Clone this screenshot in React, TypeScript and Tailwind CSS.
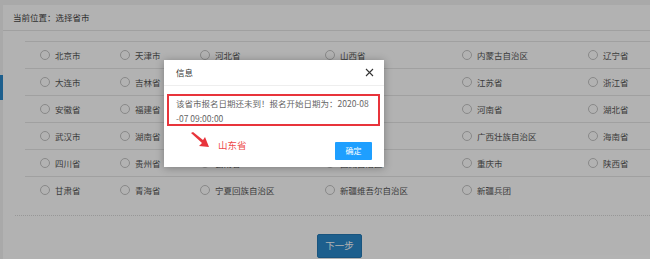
import React from "react";

const rows: string[][] = [
  ["北京市", "天津市", "河北省", "山西省", "内蒙古自治区", "辽宁省"],
  ["大连市", "吉林省", "黑龙江省", "上海市", "江苏省", "浙江省"],
  ["安徽省", "福建省", "江西省", "山东省", "河南省", "湖北省"],
  ["武汉市", "湖南省", "广东省", "深圳市", "广西壮族自治区", "海南省"],
  ["四川省", "贵州省", "云南省", "西藏自治区", "重庆市", "陕西省"],
  ["甘肃省", "青海省", "宁夏回族自治区", "新疆维吾尔自治区", "新疆兵团", ""],
];

const font = { fontFamily: '"Noto Sans CJK SC", "Noto Sans", sans-serif' };

export default function App() {
  return (
    <div className="relative w-[650px] h-[259px] overflow-hidden bg-[#f2f2f2]" style={font}>
      <div className="absolute left-0 top-[75px] w-[3px] h-[25px] bg-[#2a88ca]" />
      <div className="ml-[3px] mt-[5px] h-[254px] bg-white flex flex-col">
        <div className="h-[26px] border-b border-[#e6e6e6] flex items-center pl-[10px] text-[8.5px] text-[#444]">
          当前位置：选择省市
        </div>
        <div className="mt-[10px] ml-[22px]">
          {rows.map((r, i) => (
            <div
              key={i}
              className="grid grid-cols-[80px_80px_125px_137px_126px_1fr] h-[27px] items-center pl-[15px] border-t border-[#e6e6e6]"
            >
              {r.map((c, j) => (
                <div key={j} className="flex items-center gap-[5px] text-[8.5px] text-[#555] leading-none">
                  {c && <span className="w-[10px] h-[10px] rounded-full border border-[#c4c4c4] bg-white shrink-0" />}
                  {c && <span>{c}</span>}
                </div>
              ))}
            </div>
          ))}
        </div>
        <div className="mt-[12px] ml-[12px] border-t border-dotted border-[#d8d8d8]" />
        <div className="mt-[14px] ml-[314px]">
          <button className="w-[45px] h-[24px] bg-[#2a88ca] border border-[#2479b5] rounded-[2px] text-white text-[9.5px] leading-none">
            下一步
          </button>
        </div>
      </div>

      <div className="absolute inset-0 bg-black/30" />

      <div className="absolute left-[164px] top-[60px] w-[220px] h-[107px] bg-white shadow-[0_1px_8px_rgba(0,0,0,0.3)]">
        <div className="h-[26px] border-b border-[#eeeeee] flex items-center justify-between pl-[12px] pr-[10px]">
          <span className="text-[8.5px] text-[#333]">信息</span>
          <svg width="9" height="9" viewBox="0 0 9 9">
            <path d="M1 1L8 8M8 1L1 8" stroke="#333" strokeWidth="1.1" />
          </svg>
        </div>
        <div className="ml-[3px] mt-[8px] w-[213px] h-[32px] border-2 border-[#e8343b] pl-[7px] pt-[0px] text-[8.5px] leading-[15px] text-[#666] whitespace-nowrap">
          该省市报名日期还未到！报名开始日期为：2020-08
          <br />
          -07 09:00:00
        </div>
        <svg className="absolute left-[27px] top-[72px]" width="20" height="17" viewBox="0 0 20 17">
          <polygon points="0,1 2,0 12,8 14,5 18,15 8,14 11,11" fill="#e8343b" />
        </svg>
        <span className="absolute left-[54px] top-[76px] text-[9.5px] leading-[18px] text-[#ee4a4a]">山东省</span>
        <button className="absolute left-[171px] top-[82px] w-[37px] h-[18px] bg-[#1e9fff] text-white text-[8px] leading-none rounded-[1px]">
          确定
        </button>
      </div>
    </div>
  );
}
